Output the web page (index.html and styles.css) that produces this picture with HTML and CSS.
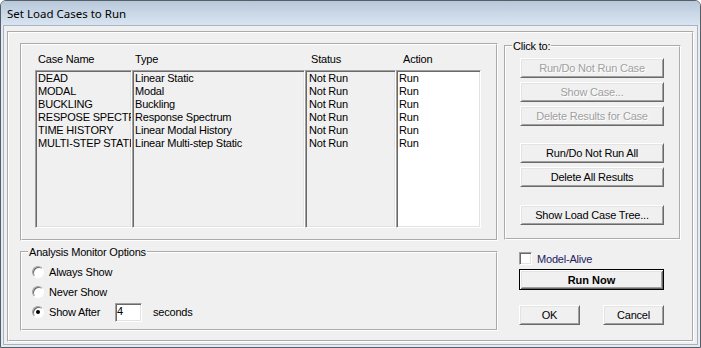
FILE: index.html
```html
<!DOCTYPE html>
<html lang="en">
<head>
    <meta charset="UTF-8">
    <meta name="viewport" content="width=device-width, initial-scale=1.0">
    <title>Set Load Cases to Run</title>
    <link rel="stylesheet" href="styles.css">
</head>
<body>
    <div class="window">
        <div class="titlebar">Set Load Cases to Run</div>
        <div class="client">
            <div class="outer">
                <div class="left">
                    <div class="list-group">
                        <div class="list-head">
                            <span class="h-name">Case Name</span>
                            <span class="h-type">Type</span>
                            <span class="h-status">Status</span>
                            <span class="h-action">Action</span>
                        </div>
                        <div class="list">
                            <div class="col col-name">
                                <div>DEAD</div>
                                <div>MODAL</div>
                                <div>BUCKLING</div>
                                <div>RESPOSE SPECTRUM</div>
                                <div>TIME HISTORY</div>
                                <div>MULTI-STEP STATIC</div>
                            </div>
                            <div class="col col-type">
                                <div>Linear Static</div>
                                <div>Modal</div>
                                <div>Buckling</div>
                                <div>Response Spectrum</div>
                                <div>Linear Modal History</div>
                                <div>Linear Multi-step Static</div>
                            </div>
                            <div class="col col-status">
                                <div>Not Run</div>
                                <div>Not Run</div>
                                <div>Not Run</div>
                                <div>Not Run</div>
                                <div>Not Run</div>
                                <div>Not Run</div>
                            </div>
                            <div class="col col-action">
                                <div>Run</div>
                                <div>Run</div>
                                <div>Run</div>
                                <div>Run</div>
                                <div>Run</div>
                                <div>Run</div>
                            </div>
                        </div>
                    </div>

                    <fieldset class="group monitor">
                        <legend>Analysis Monitor Options</legend>
                        <div class="radio-row">
                            <span class="radio"></span>
                            <span class="radio-label">Always Show</span>
                        </div>
                        <div class="radio-row">
                            <span class="radio"></span>
                            <span class="radio-label">Never Show</span>
                        </div>
                        <div class="radio-row">
                            <span class="radio checked"></span>
                            <span class="radio-label fixed">Show After</span>
                            <span class="textbox">4</span>
                            <span class="unit">seconds</span>
                        </div>
                    </fieldset>
                </div>

                <div class="right">
                    <fieldset class="group click-to">
                        <legend>Click to:</legend>
                        <button class="btn disabled">Run/Do Not Run Case</button>
                        <button class="btn disabled">Show Case...</button>
                        <button class="btn disabled">Delete Results for Case</button>
                        <button class="btn sep">Run/Do Not Run All</button>
                        <button class="btn">Delete All Results</button>
                        <button class="btn sep2">Show Load Case Tree...</button>
                    </fieldset>

                    <div class="check-row">
                        <span class="checkbox"></span>
                        <span class="check-label">Model-Alive</span>
                    </div>
                    <button class="btn run-now">Run Now</button>
                    <div class="dialog-buttons">
                        <button class="btn small">OK</button>
                        <button class="btn small">Cancel</button>
                    </div>
                </div>
            </div>
        </div>
    </div>
</body>
</html>
```

FILE: styles.css
```css
body {
    margin: 0;
    background-color: #ffffff;
    font-family: "Liberation Sans", Arial, sans-serif;
    font-size: 11px;
    letter-spacing: -0.2px;
    color: #000000;
}

.window {
    width: 701px;
    height: 348px;
    box-sizing: border-box;
    border: 1px solid #555d66;
    border-radius: 6px 6px 0 0;
    background-color: #e4ebf3;
    display: flex;
    flex-direction: column;
    overflow: hidden;
}

.titlebar {
    height: 24px;
    flex-shrink: 0;
    padding-left: 6px;
    line-height: 25px;
    font-family: "Noto Sans", sans-serif;
    font-size: 11.5px;
    letter-spacing: 0;
    background: linear-gradient(#b8c8d9, #c9d7e6 50%, #d8e4f1);
}

.client {
    flex: 1;
    margin: 0 2px 2px 2px;
    border: 1px solid #a9b4c0;
    background-color: #f0f0f0;
    padding: 5px 3px 2px 3px;
}

/* etched frames */
.outer,
.list-group,
.group {
    box-sizing: border-box;
    border: 2px groove #ffffff;
}

.outer {
    width: 687px;
    height: 311px;
    display: flex;
    gap: 6px;
    padding: 0 11px;
}

.left {
    width: 478px;
    padding-top: 10px;
}

.right {
    width: 177px;
    padding-top: 6px;
}

.list-group {
    width: 478px;
    height: 198px;
    padding: 8px 0 0 13px;
}

.list-head {
    display: flex;
    height: 13px;
    line-height: 13px;
    margin-bottom: 4px;
}

.h-name { width: 97px; padding-left: 3px; box-sizing: border-box; }
.h-type { width: 173px; padding-left: 3px; box-sizing: border-box; }
.h-status { width: 91px; padding-left: 6px; box-sizing: border-box; }
.h-action { width: 85px; padding-left: 7px; box-sizing: border-box; }

.list {
    display: flex;
    height: 158px;
}

.col {
    box-sizing: border-box;
    height: 158px;
    border-style: solid;
    border-width: 1px;
    border-color: #a0a0a0 #ffffff #ffffff #a0a0a0;
    box-shadow: inset 1px 1px 0 #696969, inset -1px -1px 0 #e3e3e3;
    padding: 1px 0 0 2px;
    line-height: 13px;
    white-space: nowrap;
    overflow: hidden;
}

.col-name { width: 97px; }
.col-type { width: 173px; }
.col-status { width: 91px; padding-left: 3px; }
.col-action { width: 85px; background-color: #ffffff; }

fieldset.group {
    margin: 0;
    padding: 0;
    min-width: 0;
}

.group legend {
    margin-left: 6px;
    padding: 0 1px;
    line-height: 14px;
}

.monitor {
    width: 478px;
    height: 86px;
    margin-top: 4px !important;
    padding-top: 3px !important;
}

.radio-row {
    display: flex;
    align-items: center;
    height: 20px;
    padding-left: 10px;
}

.radio {
    width: 12px;
    height: 12px;
    box-sizing: border-box;
    border-radius: 50%;
    border: 1px solid;
    border-color: #a0a0a0 #ffffff #ffffff #a0a0a0;
    box-shadow: inset 1px 1px 0 #696969;
    background-color: #ffffff;
    display: flex;
    align-items: center;
    justify-content: center;
}

.radio.checked::after {
    content: "";
    width: 4px;
    height: 4px;
    border-radius: 50%;
    background-color: #000000;
}

.radio-label {
    margin-left: 5px;
}

.radio-label.fixed {
    width: 66px;
}

.textbox {
    box-sizing: border-box;
    width: 27px;
    height: 19px;
    line-height: 15px;
    padding-left: 1px;
    background-color: #ffffff;
    border: 1px solid;
    border-color: #a0a0a0 #ffffff #ffffff #a0a0a0;
    box-shadow: inset 1px 1px 0 #696969, inset -1px -1px 0 #e3e3e3;
}

.unit {
    margin-left: 11px;
}

.click-to {
    width: 177px;
    height: 201px;
    padding-top: 5px !important;
    display: flex;
    flex-direction: column;
}

.btn {
    box-sizing: border-box;
    width: 144px;
    height: 20px;
    margin: 0 0 4px 14px;
    padding: 0;
    font-family: inherit;
    font-size: 11px;
    letter-spacing: -0.2px;
    color: #000000;
    background-color: #f0f0f0;
    border: 1px solid;
    border-color: #ffffff #696969 #696969 #ffffff;
    box-shadow: inset 1px 1px 0 #e3e3e3, inset -1px -1px 0 #a0a0a0;
}

.btn.disabled {
    color: #a0a0a0;
    text-shadow: 1px 1px 0 #ffffff;
}

.btn.sep {
    margin-top: 13px;
}

.btn.sep2 {
    margin-top: 14px;
}

.check-row {
    display: flex;
    align-items: center;
    height: 13px;
    margin: 12px 0 0 15px;
}

.checkbox {
    box-sizing: border-box;
    width: 13px;
    height: 13px;
    background-color: #ffffff;
    border: 1px solid;
    border-color: #a0a0a0 #ffffff #ffffff #a0a0a0;
    box-shadow: inset 1px 1px 0 #696969, inset -1px -1px 0 #e3e3e3;
}

.check-label {
    margin-left: 5px;
    color: #202060;
}

.run-now {
    display: block;
    width: 145px;
    height: 21px;
    margin: 4px 0 0 15px;
    font-weight: bold;
    letter-spacing: 0;
    border: 1px solid #000000;
    box-shadow: inset 1px 1px 0 #ffffff, inset -1px -1px 0 #696969, inset 2px 2px 0 #e3e3e3, inset -2px -2px 0 #a0a0a0;
}

.dialog-buttons {
    display: flex;
    gap: 23px;
    margin: 15px 0 0 15px;
}

.btn.small {
    width: 61px;
    margin: 0;
}
```
